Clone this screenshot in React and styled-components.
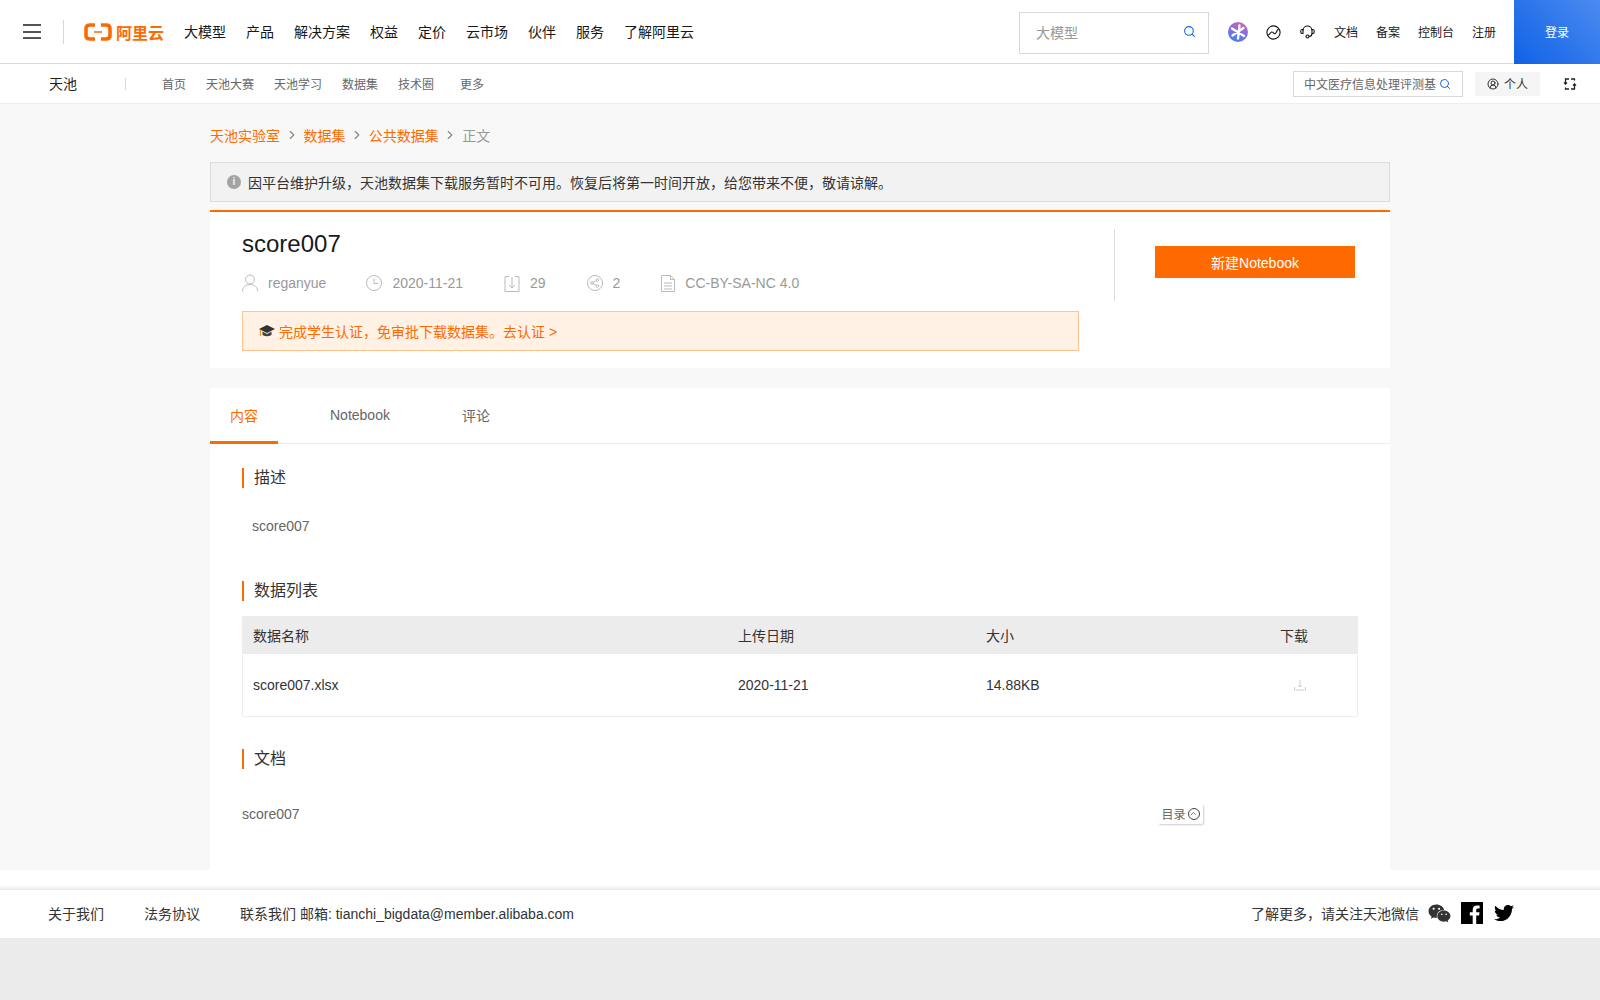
import React from 'react';
import styled, { createGlobalStyle } from 'styled-components';
import { Search, ChevronRight, ChevronUp, CircleUserRound } from 'lucide-react';
import { FaWeixin, FaTwitter } from 'react-icons/fa';

const orange = '#ff6a00';

const GlobalStyle = createGlobalStyle`
  html, body {
    margin: 0;
    padding: 0;
    background: #ebebeb;
    font-family: "Liberation Sans", "Noto Sans CJK SC", sans-serif;
    color: #333;
  }
  * { box-sizing: border-box; }
`;

const Page = styled.div`
  min-height: 1000px;
  overflow: hidden;
`;

const TopBar = styled.header`
  height: 64px;
  display: flex;
  align-items: center;
  background: #fff;
  border-bottom: 1px solid #d8d8d8;
  padding-left: 23px;
`;

const Burger = styled.div`
  width: 18px;
  height: 15px;
  display: flex;
  flex-direction: column;
  justify-content: space-between;
  span { height: 2px; background: #555; display: block; }
`;

const TopDivider = styled.div`
  width: 1px;
  height: 24px;
  background: #d8d8d8;
  margin: 0 20px 0 22px;
`;

const Logo = styled.div`
  display: flex;
  align-items: center;
  gap: 4px;
  width: 80px;
  margin-right: 20px;
  color: ${orange};
  font-size: 16px;
  font-weight: 700;
  white-space: nowrap;
`;

const TopNav = styled.nav`
  display: flex;
  gap: 20px;
  font-size: 14px;
  color: #181818;
  padding-bottom: 2px;
`;

const TopRight = styled.div`
  margin-left: auto;
  display: flex;
  align-items: center;
  height: 100%;
`;

const TopSearch = styled.div`
  width: 190px;
  height: 42px;
  margin-top: 2px;
  border: 1px solid #d8d8d8;
  display: flex;
  align-items: center;
  justify-content: space-between;
  padding: 0 12px 2px 16px;
  font-size: 14px;
  color: #999;
  margin-right: 19px;
`;

const IconSlot = styled.div`
  width: 20px;
  height: 20px;
  margin-right: ${p => p.$gap}px;
  padding-top: ${p => p.$drop || 0}px;
  display: flex;
  align-items: center;
  justify-content: center;
`;

const TopLinks = styled.div`
  display: flex;
  gap: 18px;
  font-size: 12px;
  color: #181818;
  margin-right: 18px;
`;

const Login = styled.div`
  width: 86px;
  height: 64px;
  display: flex;
  align-items: center;
  justify-content: center;
  color: #fff;
  font-size: 12px;
  background: linear-gradient(45deg, #0f62e6, #4b8bf0);
`;

const SubBar = styled.div`
  height: 40px;
  display: flex;
  align-items: center;
  background: #fff;
  border-bottom: 1px solid #eee;
  padding-left: 49px;
`;

const SubTitle = styled.div`
  font-size: 14px;
  color: #222;
  width: 76px;
  padding-bottom: 2px;
`;

const SubDivider = styled.div`
  width: 1px;
  height: 12px;
  background: #d8d8d8;
  margin-right: 36px;
`;

const SubNav = styled.nav`
  display: flex;
  gap: 20px;
  font-size: 12px;
  color: #666;
`;

const SubMore = styled.span`
  margin-left: 6px;
`;

const SubRight = styled.div`
  margin-left: auto;
  display: flex;
  align-items: center;
`;

const SubSearch = styled.div`
  width: 170px;
  height: 26px;
  border: 1px solid #d8d8d8;
  display: flex;
  align-items: center;
  justify-content: space-between;
  padding: 0 11px 0 10px;
  font-size: 12px;
  color: #666;
  white-space: nowrap;
  overflow: hidden;
  margin-right: 12px;
`;

const PersonalTab = styled.div`
  width: 65px;
  height: 24px;
  background: #f5f5f5;
  display: flex;
  align-items: center;
  justify-content: center;
  gap: 5px;
  font-size: 12px;
  color: #333;
  margin-right: 23px;
`;

const SwitchSlot = styled.div`
  width: 14px;
  height: 14px;
  margin-right: 23px;
  display: flex;
`;

const Main = styled.main`
  background: #f8f8f8;
  padding-top: 20px;
`;

const Container = styled.div`
  width: 1180px;
  margin: 0 auto;
`;

const Crumbs = styled.div`
  display: flex;
  align-items: center;
  height: 22px;
  font-size: 14px;
  color: #999;
`;

const CrumbLink = styled.span`
  color: ${orange};
`;

const CrumbSep = styled.span`
  width: 23.4px;
  display: flex;
  justify-content: center;
  color: #888;
`;

const Notice = styled.div`
  margin-top: 16px;
  height: 40px;
  display: flex;
  align-items: center;
  gap: 7px;
  padding-left: 16px;
  background: #f2f2f2;
  border: 1px solid #ddd;
  font-size: 14px;
  color: #333;
`;

const InfoDot = styled.span`
  width: 14px;
  height: 14px;
  border-radius: 50%;
  background: #a3a3a3;
  color: #f2f2f2;
  font-size: 10px;
  font-weight: 700;
  line-height: 14px;
  text-align: center;
`;

const HeadCard = styled.section`
  margin-top: 8px;
  height: 158px;
  background: #fff;
  border-top: 2px solid ${orange};
  display: flex;
  padding-left: 32px;
`;

const HeadLeft = styled.div`
  width: 837px;
`;

const DataTitle = styled.h1`
  margin: 18px 0 0;
  font-size: 24px;
  font-weight: 400;
  line-height: 28px;
  color: #1a1a1a;
`;

const MetaRow = styled.div`
  margin-top: 14px;
  height: 22px;
  display: flex;
  align-items: center;
  font-size: 14px;
  color: #999;
`;

const MetaItem = styled.div`
  display: flex;
  align-items: center;
  gap: 10px;
  margin-right: 41px;
  &:first-child { margin-right: 40px; }
  svg { display: block; flex: none; }
`;

const AuthBanner = styled.div`
  margin-top: 17px;
  height: 40px;
  display: flex;
  align-items: center;
  gap: 4px;
  padding-left: 16px;
  background: #fff2e5;
  border: 1px solid #ffc58f;
  font-size: 14px;
  color: ${orange};
`;

const HeadRight = styled.div`
  margin-top: 17px;
  margin-left: 35px;
  width: 276px;
  height: 72px;
  border-left: 1px solid #ddd;
  padding: 17px 0 0 40px;
`;

const NotebookButton = styled.button`
  width: 200px;
  height: 32px;
  background: ${orange};
  border: none;
  color: #fff;
  font-family: inherit;
  font-size: 14px;
`;

const ContentCard = styled.section`
  margin-top: 20px;
  height: 482px;
  background: #fff;
`;

const Tabs = styled.div`
  height: 56px;
  display: flex;
  border-bottom: 1px solid #eee;
`;

const Tab = styled.div`
  height: 56px;
  padding: 0 20px;
  margin-right: 32px;
  display: flex;
  align-items: center;
  font-size: 14px;
  color: ${p => (p.$active ? orange : '#666')};
  border-bottom: 3px solid ${p => (p.$active ? orange : 'transparent')};
`;

const Body = styled.div`
  padding: 24px 32px 0;
`;

const SectionTitle = styled.h3`
  margin: 0;
  height: 20px;
  line-height: 20px;
  border-left: 2px solid ${orange};
  padding-left: 10px;
  font-size: 16px;
  font-weight: 400;
  color: #333;
`;

const DescText = styled.p`
  margin: 28px 0 45px 10px;
  font-size: 14px;
  line-height: 20px;
  color: #666;
`;

const Table = styled.div`
  margin: 15px 0 32px;
  border: 1px solid #eee;
  border-top: none;
  font-size: 14px;
`;

const Row = styled.div`
  display: grid;
  grid-template-columns: 485px 248px 294px 1fr;
  align-items: center;
  padding-left: 10px;
  height: ${p => (p.$head ? 38 : 62)}px;
  background: ${p => (p.$head ? '#ececec' : '#fff')};
  color: #333;
`;

const DownloadCell = styled.span`
  padding-left: 14px;
  display: flex;
`;

const DocRow = styled.div`
  margin-top: 35px;
  display: flex;
  align-items: center;
  justify-content: space-between;
  padding-right: 155px;
  font-size: 14px;
  color: #666;
`;

const TocChip = styled.div`
  width: 45px;
  height: 20px;
  display: flex;
  align-items: center;
  justify-content: center;
  gap: 2px;
  padding-bottom: 1px;
  font-size: 12px;
  color: #666;
  background: #fff;
  box-shadow: 1px 1px 2px rgba(0, 0, 0, 0.2);
  border-radius: 2px;
`;

const TocArrow = styled.span`
  width: 12px;
  height: 12px;
  border: 1px solid #444;
  border-radius: 50%;
  display: flex;
  align-items: center;
  justify-content: center;
  color: #444;
`;

const Strip = styled.div`
  height: 20px;
  background: #fff;
  box-shadow: inset 0 -4px 4px -3px rgba(0, 0, 0, 0.14);
`;

const Footer = styled.footer`
  height: 48px;
  display: flex;
  align-items: center;
  background: #fff;
  padding: 0 0 2px 48px;
  font-size: 14px;
  color: #333;
`;

const FooterLink = styled.span`
  margin-right: 40px;
`;

const FooterRight = styled.div`
  margin-left: auto;
  margin-right: 86px;
  display: flex;
  align-items: center;
`;

const FollowText = styled.span`
  margin-right: 9px;
`;

const SocialIcon = styled.span`
  display: flex;
  margin-right: ${p => p.$gap}px;
  color: ${p => p.$color};
`;

const StarIcon = () => (
  <svg width="20" height="20" viewBox="0 0 20 20">
    <defs>
      <linearGradient id="star" x1="0.7" y1="0" x2="0.3" y2="1">
        <stop offset="0" stopColor="#d06aa8" />
        <stop offset="0.45" stopColor="#8a6ce0" />
        <stop offset="1" stopColor="#3a84f0" />
      </linearGradient>
    </defs>
    <circle cx="10" cy="10" r="10" fill="url(#star)" />
    <path d="M11.500 3.500L10 16.500M4 6.500l12 7.500M15.500 6L4.500 13.500" stroke="#fff" strokeWidth="2.300" strokeLinecap="round" />
  </svg>
);

const GlobeIcon = () => (
  <svg width="15" height="15" viewBox="0 0 15 15" fill="none" stroke="#111" strokeWidth="1.100">
    <circle cx="7.500" cy="7.500" r="6.600" />
    <path d="M1.500 10.500c1.500-.5 2-1 2.800-2.300.8-1.300 1.800-1.700 2.700-.7.900 1 1.500 1.800 2.600.8 1-1 1-3 2.900-4.300" />
  </svg>
);

const HeadsetIcon = () => (
  <svg width="15" height="15" viewBox="0 0 15 15" fill="none" stroke="#111" strokeWidth="1.100">
    <path d="M3 5.500a4.500 4.500 0 0 1 9 0" />
    <path d="M3 4.500H2Q.7 4.500.7 6.500T2 8.500h1zM12 4.500h1q1.300 0 1.300 2T13 8.500h-1z" />
    <path d="M12 8.500c0 2-1 3-3 3" />
    <circle cx="7.500" cy="11.500" r="1.500" />
  </svg>
);

const SwitchIcon = () => (
  <svg width="14" height="14" viewBox="0 0 14 14" fill="none" stroke="#222" strokeWidth="1.300">
    <path d="M6 2H2.500v4M8 2h3.500v1.500M6 12H2.500v-1.500M8 12h3.500V8" />
    <path d="M1 5.500L2.500 7 4 5.500M10 8.500L11.500 7 13 8.500" strokeWidth="1.400" />
  </svg>
);

const LogoMark = () => (
  <svg width="28" height="18" viewBox="0 0 28 18" fill="none" stroke={orange} strokeWidth="3.600">
    <path d="M11 2H6Q2 2 2 5.500v7Q2 16 6 16h5M17 2h5q4 0 4 3.500v7q0 3.500-4 3.500h-5" />
    <path d="M10 9h8" strokeWidth="1.500" />
  </svg>
);

const UserIcon = () => (
  <svg width="16" height="18" viewBox="0 0 16 18" fill="none" stroke="#bbb">
    <circle cx="8" cy="5.500" r="4.500" />
    <path d="M.5 17.500c0-4.500 3-7 7.500-7s7.500 2.500 7.500 7" />
  </svg>
);

const ClockIcon = () => (
  <svg width="16" height="16" viewBox="0 0 16 16" fill="none" stroke="#bbb">
    <circle cx="8" cy="8" r="7.500" />
    <path d="M8 3.500V8.500h4" />
  </svg>
);

const SaveIcon = () => (
  <svg width="16" height="17" viewBox="0 0 16 17" fill="none" stroke="#bbb">
    <path d="M5 1.500H1v15h14v-15h-4M8 2v11M5 10l3 3 3-3" />
  </svg>
);

const ShareIcon = () => (
  <svg width="16" height="16" viewBox="0 0 16 16" fill="none" stroke="#bbb">
    <circle cx="8" cy="8" r="7.500" />
    <circle cx="5" cy="8" r="1.300" />
    <circle cx="10.500" cy="5" r="1.300" />
    <circle cx="10.500" cy="11" r="1.300" />
    <path d="M6 7.400l3.400-1.900M6 8.600l3.400 1.900" />
  </svg>
);

const DocIcon = () => (
  <svg width="14" height="17" viewBox="0 0 14 17" fill="none" stroke="#bbb">
    <path d="M.5.500h9l4 4v12H.5zM9.500.500v4h4M3 8h8M3 11h8M3 14h8" />
  </svg>
);

const CapIcon = () => (
  <svg width="16" height="14" viewBox="0 0 16 14">
    <path d="M8 1L0 5l8 4 8-4z" fill="#333" />
    <path d="M3.500 7.500V11q4.500 2.500 9 0V7.500L8 10z" fill="#444" />
    <path d="M1.500 6v6" stroke="#e0a030" strokeWidth="1.400" />
  </svg>
);

const DownloadIcon = () => (
  <svg width="12" height="12" viewBox="0 0 12 12" fill="none" stroke="#ccc">
    <path d="M6 1v7M4 6l2 2 2-2M.5 8v3h11V8" />
  </svg>
);

const FacebookIcon = () => (
  <svg width="22" height="22" viewBox="0 0 22 22">
    <rect width="22" height="22" fill="#000" />
    <path d="M15.200 22v-8.500h2.900l.4-3.300h-3.300V8.100c0-1 .3-1.600 1.600-1.600h1.800V3.600c-.3 0-1.400-.1-2.600-.1-2.500 0-4.300 1.500-4.300 4.300v2.400H8.800v3.300h2.900V22z" fill="#fff" />
  </svg>
);

export default function App() {
  return (
    <Page>
      <GlobalStyle />
      <TopBar>
        <Burger><span /><span /><span /></Burger>
        <TopDivider />
        <Logo><LogoMark />阿里云</Logo>
        <TopNav>
          {['大模型', '产品', '解决方案', '权益', '定价', '云市场', '伙伴', '服务', '了解阿里云'].map(t => (
            <span key={t}>{t}</span>
          ))}
        </TopNav>
        <TopRight>
          <TopSearch>大模型<Search size={13} color="#1463e6" /></TopSearch>
          <IconSlot $gap={16}><StarIcon /></IconSlot>
          <IconSlot $gap={14} $drop={2}><GlobeIcon /></IconSlot>
          <IconSlot $gap={16} $drop={2}><HeadsetIcon /></IconSlot>
          <TopLinks>
            <span>文档</span><span>备案</span><span>控制台</span><span>注册</span>
          </TopLinks>
          <Login>登录</Login>
        </TopRight>
      </TopBar>

      <SubBar>
        <SubTitle>天池</SubTitle>
        <SubDivider />
        <SubNav>
          <span>首页</span><span>天池大赛</span><span>天池学习</span><span>数据集</span><span>技术圈</span>
          <SubMore>更多</SubMore>
        </SubNav>
        <SubRight>
          <SubSearch>中文医疗信息处理评测基<Search size={12} color="#1463e6" /></SubSearch>
          <PersonalTab><CircleUserRound size={12} />个人</PersonalTab>
          <SwitchSlot><SwitchIcon /></SwitchSlot>
        </SubRight>
      </SubBar>

      <Main>
        <Container>
          <Crumbs>
            <CrumbLink>天池实验室</CrumbLink>
            <CrumbSep><ChevronRight size={14} /></CrumbSep>
            <CrumbLink>数据集</CrumbLink>
            <CrumbSep><ChevronRight size={14} /></CrumbSep>
            <CrumbLink>公共数据集</CrumbLink>
            <CrumbSep><ChevronRight size={14} /></CrumbSep>
            <span>正文</span>
          </Crumbs>

          <Notice>
            <InfoDot>i</InfoDot>
            因平台维护升级，天池数据集下载服务暂时不可用。恢复后将第一时间开放，给您带来不便，敬请谅解。
          </Notice>

          <HeadCard>
            <HeadLeft>
              <DataTitle>score007</DataTitle>
              <MetaRow>
                <MetaItem><UserIcon />reganyue</MetaItem>
                <MetaItem><ClockIcon />2020-11-21</MetaItem>
                <MetaItem><SaveIcon />29</MetaItem>
                <MetaItem><ShareIcon />2</MetaItem>
                <MetaItem><DocIcon />CC-BY-SA-NC 4.0</MetaItem>
              </MetaRow>
              <AuthBanner><CapIcon />完成学生认证，免审批下载数据集。去认证 &gt;</AuthBanner>
            </HeadLeft>
            <HeadRight>
              <NotebookButton>新建Notebook</NotebookButton>
            </HeadRight>
          </HeadCard>

          <ContentCard>
            <Tabs>
              <Tab $active>内容</Tab>
              <Tab>Notebook</Tab>
              <Tab>评论</Tab>
            </Tabs>
            <Body>
              <SectionTitle>描述</SectionTitle>
              <DescText>score007</DescText>
              <SectionTitle>数据列表</SectionTitle>
              <Table>
                <Row $head>
                  <span>数据名称</span><span>上传日期</span><span>大小</span><span>下载</span>
                </Row>
                <Row>
                  <span>score007.xlsx</span><span>2020-11-21</span><span>14.88KB</span>
                  <DownloadCell><DownloadIcon /></DownloadCell>
                </Row>
              </Table>
              <SectionTitle>文档</SectionTitle>
              <DocRow>
                <span>score007</span>
                <TocChip>目录<TocArrow><ChevronUp size={9} strokeWidth={2} /></TocArrow></TocChip>
              </DocRow>
            </Body>
          </ContentCard>
        </Container>
      </Main>

      <Strip />
      <Footer>
        <FooterLink>关于我们</FooterLink>
        <FooterLink>法务协议</FooterLink>
        <span>联系我们 邮箱: tianchi_bigdata@member.alibaba.com</span>
        <FooterRight>
          <FollowText>了解更多，请关注天池微信</FollowText>
          <SocialIcon $gap={10} $color="#333"><FaWeixin size={23} /></SocialIcon>
          <SocialIcon $gap={11} $color="#000"><FacebookIcon /></SocialIcon>
          <SocialIcon $gap={0} $color="#000"><FaTwitter size={20} /></SocialIcon>
        </FooterRight>
      </Footer>
    </Page>
  );
}
